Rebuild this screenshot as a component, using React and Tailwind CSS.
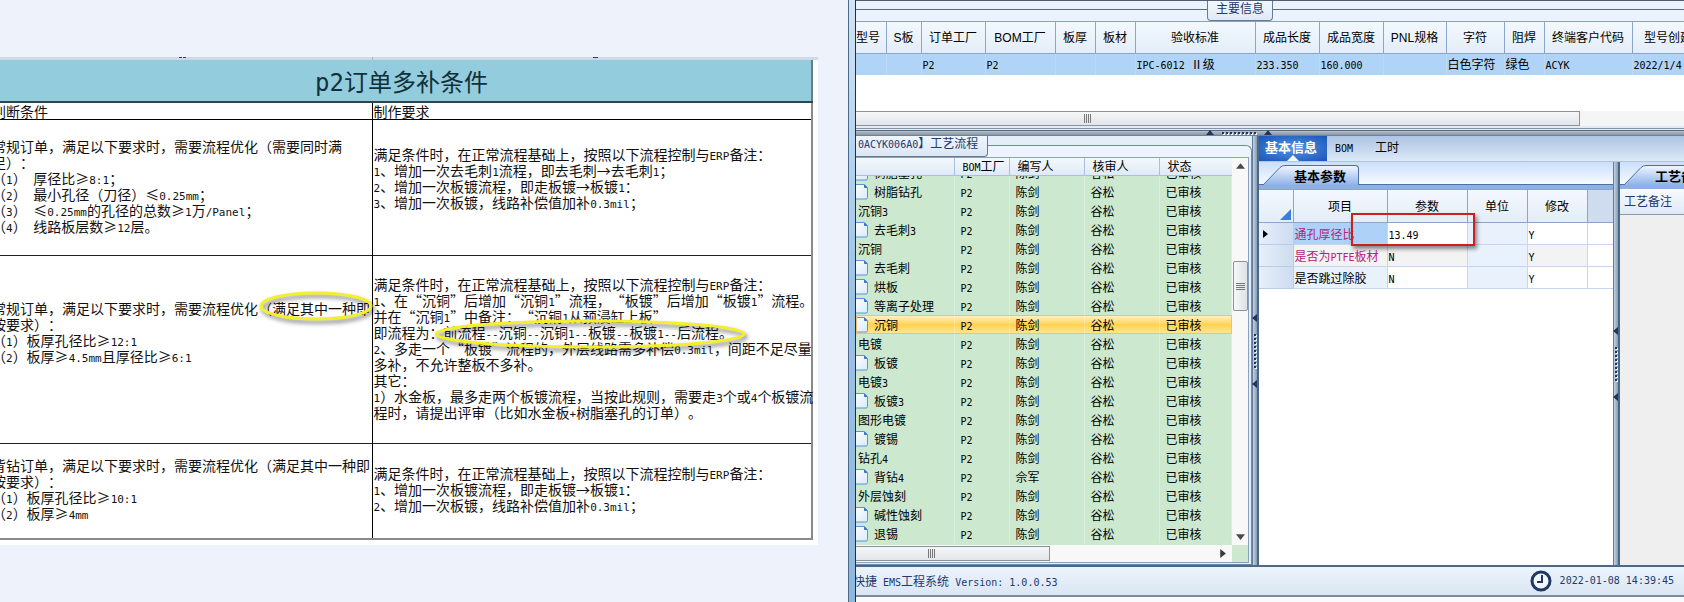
import { Fragment } from "react";

const DOC_ROWS = [
    {
        height: "h-[136px]",
        leftPad: "pb-1",
        rightPad: "pb-5",
        left: [
            "常规订单，满足以下要求时，需要流程优化（需要同时满",
            "足）：",
            "（1） 厚径比≥8:1；",
            "（2） 最小孔径（刀径）≤0.25mm；",
            "（3） ≤0.25mm的孔径的总数≥1万/Panel；",
            "（4） 线路板层数≥12层。",
        ],
        right: [
            "满足条件时，在正常流程基础上，按照以下流程控制与ERP备注：",
            "1、增加一次去毛刺1流程，即去毛刺→去毛刺1；",
            "2、增加一次板镀流程，即走板镀→板镀1：",
            "3、增加一次板镀，线路补偿值加补0.3mil；",
        ],
    },
    {
        height: "h-[188px]",
        leftPad: "pb-9",
        rightPad: "pb-1",
        left: [
            "常规订单，满足以下要求时，需要流程优化（满足其中一种即",
            "按要求）：",
            "（1）板厚孔径比≥12:1",
            "（2）板厚≥4.5mm且厚径比≥6:1",
        ],
        right: [
            "满足条件时，在正常流程基础上，按照以下流程控制与ERP备注：",
            "1、在“沉铜”后增加“沉铜1”流程，“板镀”后增加“板镀1”流程。",
            "并在“沉铜1”中备注：“沉铜1从预浸缸上板”",
            "即流程为：前流程--沉铜--沉铜1--板镀--板镀1--后流程。",
            "2、多走一个“板镀”流程的，外层线路需多补偿0.3mil，间距不足尽量",
            "多补，不允许整板不多补。",
            "其它：",
            "1）水金板，最多走两个板镀流程，当按此规则，需要走3个或4个板镀流",
            "程时，请提出评审（比如水金板+树脂塞孔的订单）。",
        ],
    },
    {
        height: "h-[95px]",
        leftPad: "pb-1",
        rightPad: "pb-1",
        left: [
            "背钻订单，满足以下要求时，需要流程优化（满足其中一种即",
            "按要求）：",
            "（1）板厚孔径比≥10:1",
            "（2）板厚≥4mm",
        ],
        right: [
            "满足条件时，在正常流程基础上，按照以下流程控制与ERP备注：",
            "1、增加一次板镀流程，即走板镀→板镀1：",
            "2、增加一次板镀，线路补偿值加补0.3mil；",
        ],
    },
];

const ORDER_COLUMNS = [
    { title: "型号", value: "", width: "w-[30px]", align: "text-right pr-2" },
    { title: "S板", value: "", width: "w-[35px]" },
    { title: "订单工厂", value: "P2", width: "w-16" },
    { title: "BOM工厂", value: "P2", width: "w-[70px]" },
    { title: "板厚", value: "", width: "w-10" },
    { title: "板材", value: "", width: "w-10" },
    { title: "验收标准", value: "IPC-6012 Ⅱ级", width: "w-[120px]" },
    { title: "成品长度", value: "233.350", width: "w-16" },
    { title: "成品宽度", value: "160.000", width: "w-16" },
    { title: "PNL规格", value: "", width: "w-[63px]" },
    { title: "字符", value: "白色字符", width: "w-[58px]" },
    { title: "阻焊", value: "绿色", width: "w-10" },
    { title: "终端客户代码", value: "ACYK", width: "w-[88px]" },
    { title: "型号创建时间", value: "2022/1/4", width: "w-24" },
];

const STEPS = [
    { name: "树脂塞孔", leaf: true, cut: true },
    { name: "树脂钻孔", leaf: true },
    { name: "沉铜3" },
    { name: "去毛刺3", leaf: true },
    { name: "沉铜" },
    { name: "去毛刺", leaf: true },
    { name: "烘板", leaf: true },
    { name: "等离子处理", leaf: true },
    { name: "沉铜", leaf: true, selected: true },
    { name: "电镀" },
    { name: "板镀", leaf: true },
    { name: "电镀3" },
    { name: "板镀3", leaf: true },
    { name: "图形电镀" },
    { name: "镀锡", leaf: true },
    { name: "钻孔4" },
    { name: "背钻4", leaf: true, author: "佘军" },
    { name: "外层蚀刻" },
    { name: "碱性蚀刻", leaf: true },
    { name: "退锡", leaf: true },
];

const PARAMS = [
    { name: "通孔厚径比", value: "13.49", nameClass: "bg-[#aed2f7] text-[#b8207c]", rowClass: "bg-white", current: true },
    { name: "是否为PTFE板材", value: "N", nameClass: "bg-[#f3f3f3] text-[#b8207c]", rowClass: "bg-[#f3f3f3]" },
    { name: "是否跳过除胶", value: "N", nameClass: "bg-[#e9f2fc]", rowClass: "bg-white" },
];

// Latin runs are set in a half-width face beside the full-width Chinese glyphs
function Mixed({ text, latin = "text-[10px]" }) {
    return text.split(/([\x20-\x7e]+)/).map((part, i) =>
        i % 2 ? (
            <span key={i} className={`leading-none whitespace-pre font-['DejaVu_Sans_Mono',monospace] ${latin}`}>{part}</span>
        ) : (
            <Fragment key={i}>{part}</Fragment>
        )
    );
}

function Lines({ items }) {
    return items.map((line) => (
        <div key={line} className="h-4 whitespace-nowrap">
            <Mixed text={line} latin="text-[11px]" />
        </div>
    ));
}

function RuleDocument() {
    return (
        <section className="relative overflow-hidden bg-[#eef2fa] pt-[57px]">
            <div className="mr-[30px] -ml-2 bg-white pr-[5px] pb-[5px]">
                <div className="-mr-[5px] flex h-[3px] bg-[#cddbe8]">
                    <div className="flex w-[380px] justify-center gap-px">
                        <span className="h-px w-[3px] bg-slate-700" />
                        <span className="h-px w-[3px] bg-slate-700" />
                    </div>
                    <div className="flex flex-1 justify-center border-l border-[#a9b9c8]">
                        <span className="h-px w-[5px] bg-slate-700" />
                    </div>
                </div>
                <table className="w-full table-fixed border-collapse text-sm leading-4 text-[#111] [text-spacing-trim:space-all]">
                    <colgroup>
                        <col className="w-[380px]" />
                        <col />
                    </colgroup>
                    <thead>
                        <tr className="h-[42px] bg-[#93ccdd]">
                            <th colSpan="2" className="border-r-2 border-b-2 border-r-[#5f7f8a] border-b-[#2b4650] p-0 text-2xl font-normal text-[#12303a]">
                                <Mixed text="p2订单多补条件" latin="text-2xl" />
                            </th>
                        </tr>
                        <tr className="h-4">
                            <th className="border-r border-b border-black p-0 text-left font-normal">判断条件</th>
                            <th className="border-r-2 border-b border-r-[#8a8a8a] border-b-black p-0 pl-px text-left font-normal">制作要求</th>
                        </tr>
                    </thead>
                    <tbody>
                        {DOC_ROWS.map((row, i) => (
                            <tr key={i} className={`${row.height} border-b border-[#222] last:border-b-2 last:border-[#8a8a8a]`}>
                                <td className={`border-r border-black p-0 align-middle ${row.leftPad}`}><Lines items={row.left} /></td>
                                <td className={`border-r-2 border-r-[#8a8a8a] p-0 pl-px align-middle ${row.rightPad}`}><Lines items={row.right} /></td>
                            </tr>
                        ))}
                    </tbody>
                </table>
            </div>
            <Ring className="top-[288px] left-[256px]" width={120} height={40} />
            <Ring className="top-[316px] left-[431px]" width={318} height={40} />
        </section>
    );
}

function Ring({ className, width, height }) {
    return (
        <svg className={`pointer-events-none absolute drop-shadow-[2px_3px_2px_rgba(0,0,0,0.5)] ${className}`} width={width} height={height} fill="none">
            <ellipse cx={width / 2} cy={height / 2 - 2} rx={width / 2 - 5} ry="13" stroke="#f3ef2c" strokeWidth="3" />
        </svg>
    );
}

function Grip({ vertical }) {
    return (
        <span className={`flex gap-px ${vertical ? "flex-col" : ""}`}>
            {[0, 1, 2, 3].map((i) => (
                <span key={i} className={vertical ? "h-px w-[9px] bg-[#777]" : "h-[9px] w-px bg-[#777]"} />
            ))}
        </span>
    );
}

function Splitter({ className = "" }) {
    return (
        <div className={`flex shrink-0 flex-col items-center justify-center gap-2 border-r-2 border-l border-r-[#47688f] border-l-[#5f7da0] bg-linear-to-r from-[#c3d3e6] to-[#8c9aa8] ${className}`}>
            <Arrow dir="left" />
            <Dots vertical />
            <Arrow dir="left" />
        </div>
    );
}

function Arrow({ dir, color = "#24345c", size = 8 }) {
    const paths = { left: "M6 0v8L1 4z", right: "M2 0v8l5-4z", up: "M0 6h8L4 1z", down: "M0 2h8L4 7z" };
    return (
        <svg width={size} height={size} viewBox="0 0 8 8" className="shrink-0">
            <path d={paths[dir]} fill={color} />
        </svg>
    );
}

function Dots({ vertical }) {
    return (
        <span className={`flex gap-[2px] p-1 ${vertical ? "flex-col" : ""}`}>
            {Array.from({ length: 9 }, (_, i) => (
                <span key={i} className="size-[2px] bg-[#24345c] shadow-[1px_1px_0_#eef4fb]" />
            ))}
        </span>
    );
}

function FileIcon() {
    return (
        <svg width="12" height="17" viewBox="0 0 12 17" className="shrink-0">
            <defs>
                <linearGradient id="sheet" x1="0" y1="0" x2="1" y2="1">
                    <stop offset="0" stopColor="#ffffff" />
                    <stop offset="1" stopColor="#d9ebfc" />
                </linearGradient>
            </defs>
            <path d="M-3 1.500H8.500L11.500 4.500V14.500q0 1.500-1.500 1.500H-3z" fill="url(#sheet)" stroke="#5a94d6" />
            <path d="M8 1.500l3.500 3.500H9q-1 0-1-1z" fill="#2f6ccc" />
        </svg>
    );
}

function OrderInfo() {
    return (
        <section className="relative border-t border-[#4f6076] bg-linear-to-b from-[#eaf2fb] to-[#f4f8fd] pt-2">
            <div className="border-t border-[#5a6d84] pt-[11px]">
                <h2 className="absolute top-0 left-[351px] h-5 rounded-b-sm border border-t-0 border-[#6a7b91] bg-linear-to-b from-[#f3f8fd] to-[#dfe9f5] px-2 text-xs leading-[14px] text-[#22386f]">主要信息</h2>
                <div className="overflow-hidden border-t border-[#8aa2c0] bg-white">
                    <table className="w-[872px] table-fixed border-collapse text-xs">
                        <thead>
                            <tr className="h-[31px] bg-linear-to-b from-[#f3f8fd] to-[#e3edf8]">
                                {ORDER_COLUMNS.map((col) => (
                                    <th key={col.title} className={`border-r border-b border-[#8ba6c9] p-0 font-normal whitespace-nowrap ${col.width} ${col.align || ""}`}>
                                        <span className="font-['Liberation_Sans','Noto_Sans_CJK_SC',sans-serif]">{col.title}</span>
                                    </th>
                                ))}
                            </tr>
                        </thead>
                        <tbody>
                            <tr className="h-[22px] bg-[#b0d4f8]">
                                {ORDER_COLUMNS.map((col) => (
                                    <td key={col.title} className="border-r border-[#bcd9f6] p-0 pl-px whitespace-nowrap">
                                        <Mixed text={col.value} />
                                    </td>
                                ))}
                            </tr>
                        </tbody>
                    </table>
                    <div className="h-9" />
                    <div className="flex h-[15px] bg-[#f5f5f5]">
                        <div className="flex w-[724px] items-center border border-l-0 border-[#8b929b] bg-linear-to-b from-[#f5f6f7] to-[#e2e6ea] pl-[228px]">
                            <Grip />
                        </div>
                    </div>
                </div>
            </div>
        </section>
    );
}

function HorizontalSplitter() {
    return (
        <div className="flex h-[10px] flex-col bg-[#e3ebf4] pt-[2px]">
            <div className="h-[2px] border-t border-[#7d93ae]" />
            <div className="flex h-[6px] items-center gap-1 border-y border-t-[#5b6a7b] border-b-[#6f8198] bg-linear-to-b from-[#b5c0cc] to-[#8795a5] pl-[350px]">
                <Arrow dir="up" />
                <Dots />
                <Arrow dir="up" />
            </div>
        </div>
    );
}

function StepCell({ step, icon, children, className = "" }) {
    return (
        <td className="border-r border-white/30 p-0">
            <div className={`flex items-end overflow-hidden ${step.cut ? "h-[6px]" : "h-[19px]"} ${className}`}>
                <span className="flex h-[19px] shrink-0 items-center gap-[6px] leading-[19px] whitespace-nowrap">
                    {icon}
                    <span>{children}</span>
                </span>
            </div>
        </td>
    );
}

function ProcessPanel() {
    return (
        <section className="flex w-[396px] shrink-0 flex-col bg-[#e4eef9]">
            <div className="relative h-[21px]">
                <div className="absolute inset-x-0 top-[9px] h-3 rounded-tr-md border-t border-r border-[#7189a8] bg-[#edf4fc]" />
                <h2 className="relative h-[21px] w-[132px] rounded-br-sm border-r border-b border-[#6a7b91] bg-linear-to-b from-[#eef5fd] to-[#dce7f4] pl-[2px] text-xs leading-[14px] whitespace-nowrap text-[#22386f]">
                    <Mixed text="0ACYK006A0】工艺流程" />
                </h2>
            </div>
            <div className="flex-1 border-r border-b border-[#7189a8] pr-[2px] pb-px">
                <div className="grid h-full grid-cols-[1fr_16px] grid-rows-[1fr_17px] border border-l-0 border-[#8aa2c0]">
                    <div className="bg-[#cce8cf]">
                        <table className="w-full table-fixed border-collapse text-xs">
                            <thead>
                                <tr className="h-[17px] bg-linear-to-b from-[#f3f8fd] to-[#dfeaf6] leading-4">
                                    <th className="w-[98px] border-r border-b border-[#a9bfdc] p-0" aria-label="工序" />
                                    <th className="w-[55px] border-r border-b border-[#a9bfdc] p-0 pl-2 text-left font-normal whitespace-nowrap"><Mixed text="BOM工厂" /></th>
                                    <th className="w-[75px] border-r border-b border-[#a9bfdc] p-0 pl-2 text-left font-normal">编写人</th>
                                    <th className="w-[75px] border-r border-b border-[#a9bfdc] p-0 pl-2 text-left font-normal">核审人</th>
                                    <th className="border-b border-[#a9bfdc] p-0 pl-2 text-left font-normal">状态</th>
                                </tr>
                            </thead>
                            <tbody>
                                {STEPS.map((step, i) => (
                                    <tr key={i} className={step.selected ? "bg-linear-to-b from-[#fff3cf] via-[#ffd34f] to-[#ffe794] outline -outline-offset-1 outline-[#eec26e]" : ""}>
                                        <StepCell step={step} icon={step.leaf && <FileIcon />} className={step.leaf ? "" : "pl-[2px]"}>
                                            <Mixed text={step.name} />
                                        </StepCell>
                                        <StepCell step={step} className="pl-[6px]"><Mixed text="P2" /></StepCell>
                                        <StepCell step={step} className="pl-[6px]">{step.author || "陈剑"}</StepCell>
                                        <StepCell step={step} className="pl-[6px]">谷松</StepCell>
                                        <StepCell step={step} className="pl-[6px]">已审核</StepCell>
                                    </tr>
                                ))}
                            </tbody>
                        </table>
                    </div>
                    <div className="flex flex-col items-center bg-[#f8f8f8] py-1">
                        <Arrow dir="up" color="#4a4a4a" size={9} />
                        <div className="mt-[90px] flex h-[50px] w-[15px] items-center justify-center rounded-xs border border-[#8b929b] bg-linear-to-r from-[#f7f8f9] to-[#dde1e6]">
                            <Grip vertical />
                        </div>
                        <span className="flex-1" />
                        <Arrow dir="down" color="#4a4a4a" size={9} />
                    </div>
                    <div className="flex items-center bg-[#f8f8f8] pr-[5px]">
                        <div className="flex h-[15px] w-[194px] items-center border border-l-0 border-[#8b929b] bg-linear-to-b from-[#f5f6f7] to-[#e2e6ea] pl-[72px]">
                            <Grip />
                        </div>
                        <span className="flex-1" />
                        <Arrow dir="right" color="#3a3a3a" size={9} />
                    </div>
                    <div className="bg-[#cce8cf]" />
                </div>
            </div>
        </section>
    );
}

function SubTab({ children }) {
    return (
        <div className="flex h-[23px] items-end border-b border-[#4a70a8] bg-linear-to-b from-[#cbdefa] to-[#f6faff] pl-[4px]">
            <svg width="22" height="20" viewBox="0 0 22 20" className="-mb-px shrink-0">
                <defs>
                    <linearGradient id="slope" x1="0" y1="0" x2="0" y2="1">
                        <stop offset="0" stopColor="#f1f6fe" />
                        <stop offset="1" stopColor="#8fb3e8" />
                    </linearGradient>
                </defs>
                <path d="M0 20 17 2.500Q19 .5 22 .5V20z" fill="url(#slope)" />
                <path d="M0 20 17 2.500Q19 .5 22 .5" fill="none" stroke="#4a70a8" />
            </svg>
            <button type="button" className="-mb-px h-5 rounded-tr-sm border-t border-r border-[#4a70a8] bg-linear-to-b from-[#f1f6fe] to-[#8fb3e8] pr-3 pl-[9px] text-[13px] leading-4 font-bold whitespace-nowrap">
                {children}
            </button>
        </div>
    );
}

function ParamPanel() {
    return (
        <div className="flex w-[354px] shrink-0 flex-col bg-white">
            <SubTab>基本参数</SubTab>
            <div className="h-1 bg-[#8fb0e2]" />
            <div className="relative">
                <table className="w-full table-fixed border-collapse text-xs">
                    <thead>
                        <tr className="h-[33px] bg-linear-to-b from-[#f3f8fd] to-[#e3edf8]">
                            <th className="w-[34px] border border-l-0 border-[#8ba6c9] p-0 pr-[2px] pb-[2px] align-bottom">
                                <svg width="11" height="11" className="ml-auto"><path d="M11 0v11H0z" fill="#3f7ed6" /></svg>
                            </th>
                            <th className="w-[94px] border border-[#8ba6c9] p-0 font-normal">项目</th>
                            <th className="w-20 border border-[#8ba6c9] p-0 font-normal">参数</th>
                            <th className="w-[60px] border border-[#8ba6c9] p-0 font-normal">单位</th>
                            <th className="w-[60px] border border-[#8ba6c9] p-0 font-normal">修改</th>
                            <th className="border border-r-0 border-[#8ba6c9] bg-[#cfdcef] p-0" aria-label="更多" />
                        </tr>
                    </thead>
                    <tbody>
                        {PARAMS.map((param) => (
                            <tr key={param.name} className={`h-[22px] whitespace-nowrap ${param.rowClass}`}>
                                <td className="border border-l-0 border-[#b9cde8] bg-linear-to-r from-[#e6effa] to-[#cddcf0] p-0 pl-1">
                                    {param.current && <svg width="5" height="8"><path d="M0 0v8l5-4z" /></svg>}
                                </td>
                                <td className={`border border-[#c5d6ee] p-0 pl-px ${param.nameClass}`}><Mixed text={param.name} /></td>
                                <td className="border border-[#c5d6ee] p-0 pl-px"><Mixed text={param.value} /></td>
                                <td className="border border-[#c5d6ee] bg-[#e9f2fc] p-0" />
                                <td className="border border-[#c5d6ee] p-0 pl-px"><Mixed text="Y" /></td>
                                <td className="border border-r-0 border-[#c5d6ee] bg-white p-0" />
                            </tr>
                        ))}
                    </tbody>
                </table>
                <div className="pointer-events-none absolute top-6 left-[92px] h-[33px] w-[124px] border-2 border-[#cc1f1f] shadow-[2px_3px_4px_rgba(0,0,0,0.45)]" />
            </div>
        </div>
    );
}

function DetailPanel() {
    return (
        <section className="flex min-w-0 flex-1 flex-col overflow-hidden">
            <nav className="flex h-[26px] border-b border-[#b4c3d6] bg-linear-to-b from-[#adc4e2] to-[#dde9f7] text-xs">
                <button type="button" className="relative w-[68px] bg-radial from-[#4f93ea] to-[#1c55b4] pb-[3px] pl-[6px] text-left text-[13px] font-bold whitespace-nowrap text-white">
                    基本信息
                    <svg width="12" height="6" className="absolute bottom-0 left-7"><path d="M0 6 6 0l6 6z" fill="#f4f9ff" /></svg>
                </button>
                <button type="button" className="px-2 pb-[3px]"><Mixed text="BOM" /></button>
                <button type="button" className="px-[14px] pb-[3px]">工时</button>
            </nav>
            <div className="flex flex-1">
                <ParamPanel />
                <Splitter className="w-[7px]" />
                <div className="flex min-w-0 flex-1 flex-col bg-[#efefef]">
                    <SubTab>工艺备注</SubTab>
                    <div className="h-1 bg-[#8fb0e2]" />
                    <div className="h-[26px] border-b border-[#8b98aa] bg-linear-to-b from-[#f7fafe] to-[#dfe9f6] pl-1 text-xs leading-6 whitespace-nowrap text-[#22386f]">工艺备注</div>
                </div>
            </div>
        </section>
    );
}

function StatusBar() {
    return (
        <footer className="flex h-8 items-center justify-between overflow-hidden border-t-2 border-b-2 border-t-[#4d6784] border-b-[#7d8a99] bg-linear-to-b from-[#ecf4fc] to-[#dbe6f3] pb-px text-xs whitespace-nowrap text-[#22386f]">
            <span className="-ml-[3px]"><Mixed text="快捷 EMS工程系统 Version: 1.0.0.53" /></span>
            <span className="flex items-center gap-2 pr-[10px]">
                <svg width="22" height="22" viewBox="0 0 22 22" fill="none" stroke="#1f3864">
                    <circle cx="11" cy="11" r="9" fill="#f2f7fd" strokeWidth="3" />
                    <path d="M12 5v7H7" strokeWidth="2" />
                </svg>
                <Mixed text="2022-01-08 14:39:45" />
            </span>
        </footer>
    );
}

export default function App() {
    return (
        <main className="grid min-h-screen grid-cols-[minmax(0,848fr)_minmax(0,836fr)] overflow-hidden bg-white font-['Noto_Sans_CJK_SC',sans-serif] text-black">
            <RuleDocument />
            <div className="flex min-w-0">
                <div className="w-2 shrink-0 border-x border-l-[#4b6a8a] border-r-[#1d2f42] bg-linear-to-b from-[#d3e4f4] via-[#9cc2e6] to-[#8fb6dd]" />
                <div className="flex min-w-0 flex-1 flex-col overflow-hidden">
                    <OrderInfo />
                    <HorizontalSplitter />
                    <div className="flex flex-1">
                        <ProcessPanel />
                        <Splitter className="w-[7px]" />
                        <DetailPanel />
                    </div>
                    <StatusBar />
                    <div className="h-[5px] bg-[#f8fafb]" />
                </div>
            </div>
        </main>
    );
}
